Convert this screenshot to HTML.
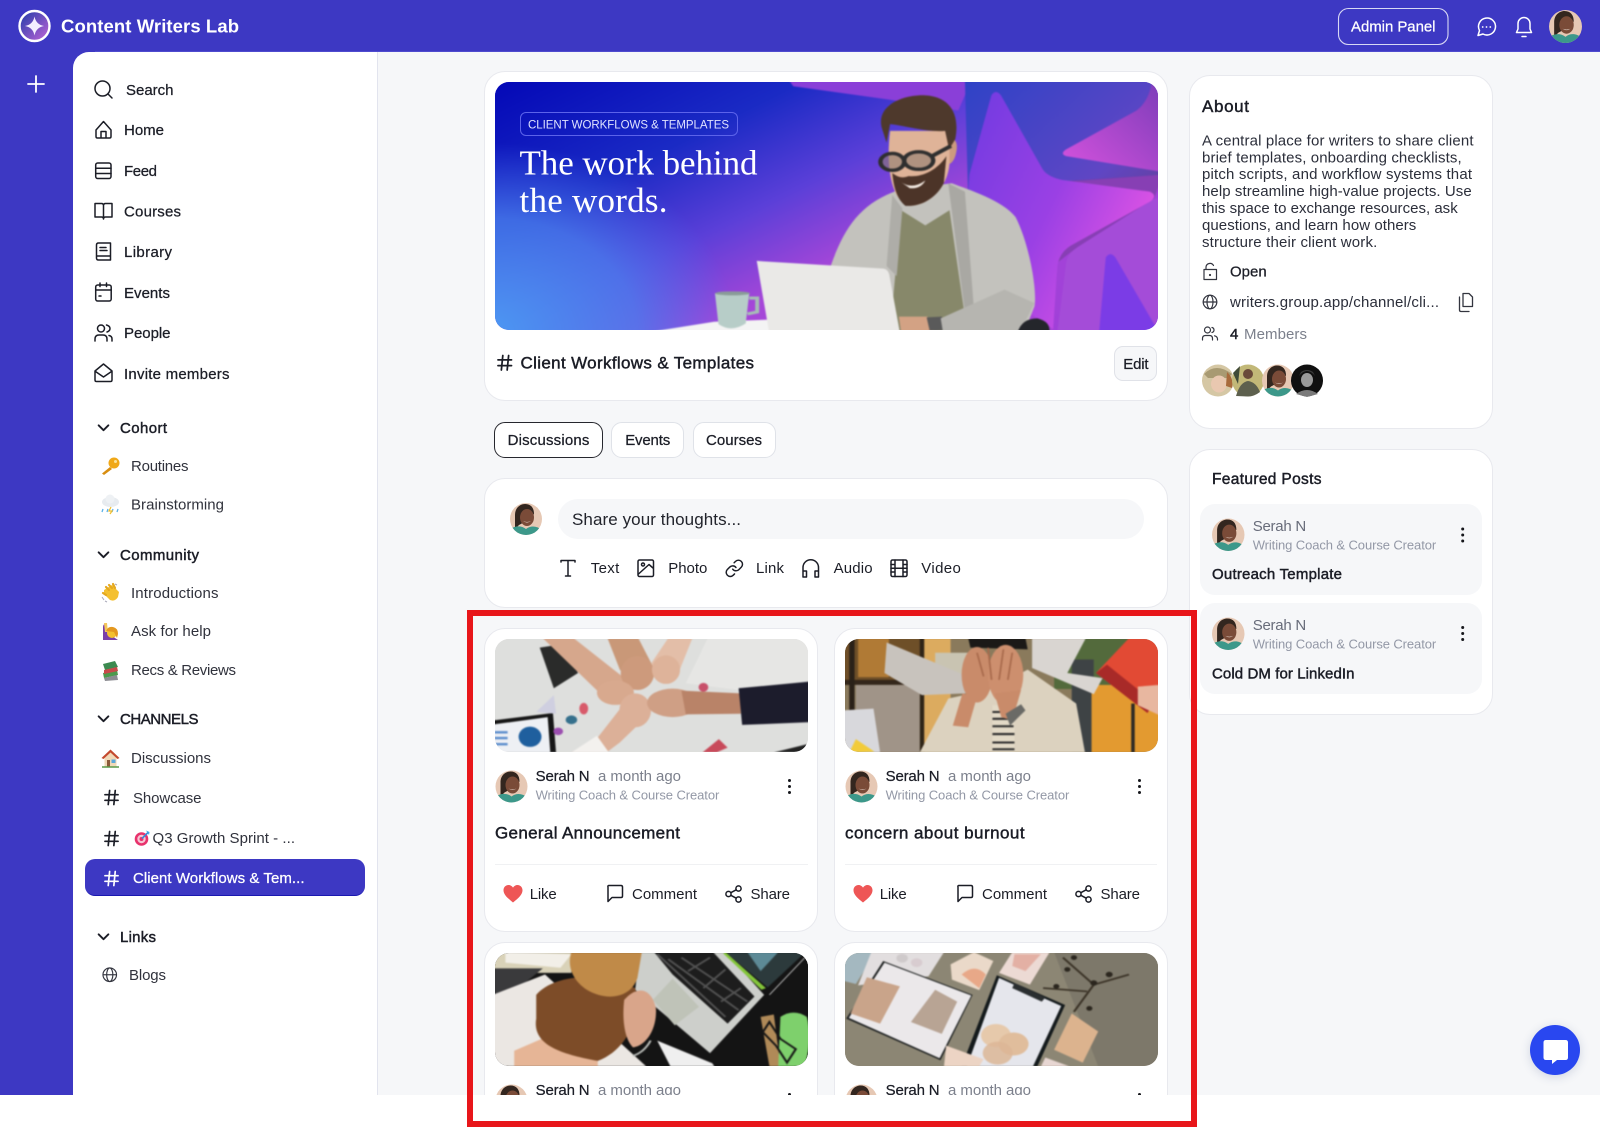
<!DOCTYPE html>
<html lang="en"><head><meta charset="utf-8"><title>Content Writers Lab</title>
<style>
html,body{margin:0;padding:0;background:#fff;overflow:hidden}
#p{position:relative;width:1600px;height:1128px;overflow:hidden;background:#f6f7f9;font-family:"Liberation Sans",sans-serif}
#p div{position:absolute;box-sizing:border-box}
.card{background:#fff;border:1.5px solid #e8e9ee;border-radius:21px}
.ph{overflow:hidden;border-radius:14px}
.ph svg{display:block;width:100%;height:100%;filter:blur(.7px);transform:scale(1.015)}
.tab{background:#fff;border:1.5px solid #dfe2e8;border-radius:11px;top:422px;height:36px}
.fi{background:#f6f7f9;border-radius:15px;left:1200px;width:282px}
svg.layer{position:absolute;left:0;top:0}
text{font-family:"Liberation Sans",sans-serif;font-size:15px;fill:currentColor;color:#1b1d26}
.m{stroke:currentColor;stroke-width:.25}
.b{stroke:currentColor;stroke-width:.45}
.sub{font-size:13px;color:#9398a6}
.g{color:#7c808c}
.r{color:#30323c}
.h{font-size:17px}
.ic{fill:none;stroke:#1b1d26;stroke-width:1.5;stroke-linecap:round;stroke-linejoin:round}
</style></head><body><div id="p">
<div style="left:0;top:0;width:1600px;height:52px;background:#3d38c3;border-bottom:1px solid #4f4bcf"></div>
<div style="left:0;top:50px;width:95px;height:1045px;background:#3d38c3"></div>
<div style="left:73px;top:52px;width:305px;height:1043px;background:#fff;border-right:1.5px solid #e2e4ee;border-top-left-radius:16px"></div>
<div style="left:85px;top:859px;width:280px;height:37px;background:#3d38c3;border-radius:10px;border-bottom:1.5px solid #1a18b0"></div>

<div class="card" style="left:484px;top:71px;width:684px;height:330px"></div>
<div class="ph" style="left:495px;top:82px;width:663px;height:248px;background:#5b3fd8">
<svg viewBox="11 20 1529 745" preserveAspectRatio="none">
<defs>
<linearGradient id="bg" x1="0" y1="0" x2="1" y2=".75"><stop offset="0" stop-color="#0307b6"/><stop offset=".3" stop-color="#1a2ac4"/><stop offset=".5" stop-color="#5b3fd8"/><stop offset=".68" stop-color="#a546d8"/><stop offset="1" stop-color="#a040d8"/></linearGradient>
<radialGradient id="bl" gradientUnits="userSpaceOnUse" cx="11" cy="765" r="560"><stop offset="0" stop-color="#4c98f2"/><stop offset=".6" stop-color="#4a80ee" stop-opacity=".75"/><stop offset="1" stop-color="#4a70ee" stop-opacity="0"/></radialGradient>
<linearGradient id="st" x1="0" y1="0" x2="1" y2=".6"><stop offset="0" stop-color="#6d3ae0"/><stop offset=".55" stop-color="#9a40e4"/><stop offset="1" stop-color="#e455e4"/></linearGradient>
<linearGradient id="dk" x1="0" y1="0" x2="1" y2="1"><stop offset="0" stop-color="#2e42c6"/><stop offset=".6" stop-color="#5f46c4"/><stop offset="1" stop-color="#6a3a80"/></linearGradient>
<linearGradient id="tp" x1="1" y1="0" x2="0" y2="1"><stop offset="0" stop-color="#7a3cb8"/><stop offset="1" stop-color="#d652de"/></linearGradient>
</defs>
<rect x="11" y="20" width="1529" height="745" fill="url(#bg)"/>
<rect x="11" y="20" width="1529" height="745" fill="url(#bl)"/>
<path d="M690 20H1105L1075 110 920 78 700 38Z" fill="#8a3fd8"/>
<path d="M1090 20H1540V300L1340 320 1300 540 1100 500Z" fill="url(#dk)"/>
<path d="M1515 20H1540V292L1320 245Q1305 238 1320 225L1480 110Q1510 80 1515 20Z" fill="url(#tp)"/>
<path d="M1540 300V765H1300L1320 560Q1325 530 1345 515L1515 375 1535 365Z" fill="#a44cd8"/>
<path d="M1540 300 1300 320 1300 560 1345 515 1520 370Z" fill="#7d3ea8" opacity=".75"/>
<path d="M1150 65Q1160 45 1172 65L1265 280Q1275 305 1310 315L1510 350Q1530 362 1510 380L1330 510Q1305 530 1300 570L1290 765H1080L1100 300Z" fill="url(#st)"/>
<path d="M1410 545Q1420 525 1432 545L1530 765H1395Z" fill="#7b3ce6"/>
<path d="M700 765 1020 520 1300 765Z" fill="#a744d8"/>
<path d="M375 765 520 735 660 728V765Z" fill="#f4f4f4"/>
<path d="M785 570C815 460 850 385 940 345L1060 325C1100 345 1175 375 1205 425 1235 500 1255 640 1248 690L1225 765H880Z" fill="#c3c2bd"/>
<path d="M945 405 1000 450 1055 405 1095 765H920Z" fill="#87886a"/>
<path d="M1052 325 1090 350 1110 690 1090 705Z" fill="#a9a8a3"/>
<path d="M925 360 948 400 935 600 912 570Z" fill="#aeada8"/>
<path d="M1050 190Q1078 190 1070 235 1065 270 1045 272Z" fill="#cc9a7e"/>
<path d="M920 170H1055V265C1052 335 1010 392 965 392 930 385 908 300 920 170Z" fill="#dfb398"/>
<path d="M925 295C940 310 950 310 962 304 990 308 1025 290 1048 245L1042 325C1022 375 985 395 955 392 935 372 928 335 925 295Z" fill="#4c3428"/>
<path d="M945 322Q970 345 1000 317 990 342 965 340Z" fill="#f4ebe3"/>
<path d="M902 165C885 95 950 62 1000 65 1052 68 1080 115 1068 195L1054 225 1045 170C1005 175 955 155 920 150L912 205Z" fill="#4e392c"/>
<ellipse cx="925" cy="262" rx="27" ry="25" fill="#8f7b70" fill-opacity=".6" stroke="#2f2f2f" stroke-width="10"/>
<ellipse cx="985" cy="258" rx="33" ry="26" fill="#8f7b70" fill-opacity=".6" stroke="#2f2f2f" stroke-width="10"/>
<path d="M1015 245 1058 215" stroke="#2f2f2f" stroke-width="11"/>
<path d="M617 555 905 578Q915 580 918 595L942 765H645Z" fill="#eae9e7"/>
<path d="M600 665H618V706L596 712" fill="none" stroke="#a6bcb6" stroke-width="9"/>
<path d="M522 650H600L592 740Q560 768 530 742Z" fill="#b7cdc8"/>
<ellipse cx="562" cy="651" rx="40" ry="6" fill="#8a9c98"/>
<path d="M940 720 1005 720 1020 765H945Z" fill="#d3a284"/>
<path d="M1003 722 1038 720 1040 760 1010 762Z" fill="#5a5a5a"/>
<path d="M1035 725 1180 640 1248 680 1215 765H1040Z" fill="#b6b5b0"/>
<path d="M1210 765Q1220 725 1255 725 1285 735 1282 765Z" fill="#24262b"/>
</svg></div>
<div style="left:519.500px;top:112px;width:218px;height:24px;border:1.500px solid #5c63ea;border-radius:6px"></div>
<div style="left:1114px;top:346px;width:43px;height:35px;background:#f6f7f9;border:1.500px solid #e0e2e8;border-radius:9px"></div>

<div class="tab" style="left:494px;width:109px;border-color:#26272e"></div>
<div class="tab" style="left:611px;width:73px"></div>
<div class="tab" style="left:692.500px;width:83px"></div>

<div class="card" style="left:484px;top:478px;width:684px;height:130px"></div>
<div style="left:558px;top:499px;width:586px;height:40px;background:#f6f7f9;border-radius:20px"></div>

<div class="card" style="left:484px;top:628px;width:334px;height:304px"></div>
<div class="card" style="left:834px;top:628px;width:334px;height:304px"></div>
<div class="card" style="left:484px;top:942px;width:334px;height:186px;border-radius:21px 21px 0 0"></div>
<div class="card" style="left:834px;top:942px;width:334px;height:186px;border-radius:21px 21px 0 0"></div>
<div style="left:495px;top:864px;width:313px;height:1px;background:#f0f1f3"></div>
<div style="left:845px;top:864px;width:312px;height:1px;background:#f0f1f3"></div>

<div class="ph" style="left:495px;top:639px;width:313px;height:112.500px;background:#dcdcda">
<svg viewBox="11 27 722 337" preserveAspectRatio="none">
<rect x="11" y="27" width="722" height="337" fill="#dedfdd"/>
<path d="M500 27H733V160L570 180 450 160Z" fill="#e6e6e4"/>
<path d="M118 55 168 45 205 130 150 175Z" fill="#2a2b2a"/>
<path d="M125 27H195L330 165 275 215Z" fill="#d6a78c"/>
<path d="M272 27H342L375 110 340 180 300 120Z" fill="#c99878"/>
<path d="M410 27H465L430 140 380 130 372 100Z" fill="#e3bea8"/>
<ellipse cx="340" cy="130" rx="38" ry="50" fill="#cd9a7c"/>
<ellipse cx="405" cy="120" rx="32" ry="42" fill="#deb39a"/>
<ellipse cx="290" cy="188" rx="42" ry="36" fill="#d8a98e"/>
<ellipse cx="335" cy="240" rx="36" ry="50" fill="#dcb098"/>
<path d="M250 320 310 220 360 260 300 335 270 364H190Z" fill="#dcb098"/>
<path d="M190 364 248 315 275 364Z" fill="#f3f1ee"/>
<ellipse cx="420" cy="218" rx="58" ry="42" fill="#cf9f85"/>
<path d="M440 182 575 190 575 250 450 252Z" fill="#b98368"/>
<path d="M570 175 733 155V275L578 283Z" fill="#1c1c2c"/>
<path d="M11 270 148 248 155 364H11Z" fill="#161616"/><path d="M11 282 136 260 142 364H11Z" fill="#eef0f4"/>
<ellipse cx="96" cy="318" rx="26" ry="30" fill="#1f5f9e"/>
<path d="M15 305H45M15 322H45M15 340H45" stroke="#5a8ccc" stroke-width="7"/>
<circle cx="160" cy="302" r="11" fill="#9c4fb0"/><circle cx="190" cy="268" r="13" fill="#35708c"/><ellipse cx="218" cy="235" rx="10" ry="17" fill="#d85a6a"/><ellipse cx="490" cy="172" rx="11" ry="13" fill="#c8506a"/>
<path d="M488 364 525 325 545 350 520 364Z" fill="#c84a5a"/>
<path d="M650 364 725 340V364Z" fill="#222"/>
<path d="M110 245 150 195 155 250Z" fill="#cfcfe0"/>
</svg></div>
<div class="ph" style="left:845px;top:639px;width:312.500px;height:112.500px;background:#8a7a5c">
<svg viewBox="820 27 720 337" preserveAspectRatio="none">
<rect x="820" y="27" width="720" height="337" fill="#8a7a5c"/>
<rect x="820" y="27" width="195" height="130" fill="#6e4f28"/>
<rect x="855" y="27" width="70" height="115" fill="#b07a35"/>
<rect x="1005" y="27" width="60" height="337" fill="#dcab5f"/>
<rect x="1030" y="70" width="90" height="70" fill="#c9c4b2"/>
<rect x="820" y="150" width="200" height="15" fill="#33261a"/>
<rect x="835" y="27" width="12" height="337" fill="#2a2118"/><rect x="995" y="27" width="10" height="337" fill="#2f2417"/>
<rect x="850" y="165" width="145" height="199" fill="#a09488"/>
<rect x="1300" y="27" width="240" height="150" fill="#536a3c"/>
<rect x="1340" y="90" width="50" height="274" fill="#3e4345"/>
<rect x="1385" y="165" width="155" height="199" fill="#e39a30"/>
<rect x="1475" y="220" width="8" height="144" fill="#2d2a25"/>
<path d="M920 40 1095 135 1100 190 1000 195 915 130Z" fill="#c8c3bd"/>
<path d="M1250 27H1372L1330 130 1410 145 1390 192 1250 115Z" fill="#d9d5d1"/>
<path d="M995 364 1060 205 1150 180 1240 120 1350 220 1370 364Z" fill="#dcd2bf"/>
<path d="M1160 225H1210V364H1160Z" fill="#e3dac7"/>
<path d="M1160 245H1205M1160 265H1205M1160 287H1208M1160 310H1210M1160 335H1210M1160 355H1210" stroke="#2b2b2b" stroke-width="6"/>
<path d="M1105 27H1235L1240 60 1110 55Z" fill="#1b1917"/>
<ellipse cx="1125" cy="135" rx="35" ry="82" fill="#c98b6a"/>
<ellipse cx="1190" cy="135" rx="40" ry="88" fill="#cd8f6e"/>
<path d="M1092 190 1125 200 1105 290 1070 285Z" fill="#c98b6a"/>
<path d="M1165 190 1225 180 1205 270 1180 260Z" fill="#c98b6a"/>
<path d="M1125 70 1140 140M1150 55 1158 150M1185 60 1175 150M1205 70 1195 150" stroke="#a86a4c" stroke-width="4"/>
<path d="M1190 250 1225 222 1235 240 1200 285Z" fill="#6a6a66"/>
<path d="M1395 130 1470 27H1540V180L1512 248Z" fill="#e24a34"/><path d="M1395 130 1512 248 1525 215 1420 105Z" fill="#a82a28"/>
<path d="M1490 170 1540 165V255L1490 225Z" fill="#e8b7a0"/>
<path d="M820 240 890 235 905 364H820Z" fill="#d8d8dc"/>
<path d="M835 364 850 325 892 362Z" fill="#f2cb3a"/>
</svg></div>
<div class="ph" style="left:495px;top:953px;width:313px;height:112.500px;background:#141414">
<svg viewBox="11 24 722 337" preserveAspectRatio="none">
<rect x="11" y="24" width="722" height="337" fill="#141414"/>
<path d="M11 24H190V85H11Z" fill="#d9d2b8"/><path d="M40 24 190 30 165 70 40 55Z" fill="#f2efe8"/>
<path d="M11 72 125 72 60 140 11 155Z" fill="#3a3a3c"/>
<path d="M11 150 130 90 360 361H11Z" fill="#ebe7e3"/>
<path d="M345 24H540L628 150 505 322 335 135Z" fill="#cdcfcb"/>
<path d="M378 24H512L606 155 545 235 420 90Z" fill="#1d1d1d"/>
<path d="M410 45 570 195M440 40 590 170M385 30 540 215M455 80 505 40M490 130 540 75M530 170 575 130" stroke="#6a6a6a" stroke-width="5" opacity=".7"/>
<path d="M420 102 480 185 425 240 375 165Z" fill="#bfc3b8"/>
<path d="M540 24H722L636 128Z" fill="#2c3a3c"/>
<path d="M540 24 632 130 622 135 535 28Z" fill="#84c63a"/>
<path d="M590 24H660L620 80Z" fill="#5d8a96"/>
<path d="M722 38 640 150" stroke="#ddd" stroke-width="2"/>
<path d="M385 285 510 352 515 361H415Z" fill="#efefef"/>
<path d="M60 315 140 270 250 310 250 361H60Z" fill="#e6b596"/>
<path d="M110 150C150 90 250 80 335 130 348 210 320 310 250 345 170 325 100 300 110 220Z" fill="#7d4c28"/>
<path d="M190 24H350L340 100C325 160 270 170 225 135 190 105 180 60 190 24Z" fill="#c08a48"/>
<path d="M310 165C340 120 372 130 382 190 385 250 360 300 330 305 310 280 305 220 310 165Z" fill="#d9a58a"/>
<path d="M330 330Q355 320 370 285" stroke="#b9bcb8" stroke-width="5" fill="none"/>
<path d="M620 215 650 208 665 361 640 361Z" fill="#b08a58"/>
<path d="M665 215Q695 190 725 215 738 280 720 361H660Z" fill="#7ed06c"/>
<path d="M640 230 665 280 700 310 680 350 655 300 625 260Z" fill="none" stroke="#161616" stroke-width="5"/>
</svg></div>
<div class="ph" style="left:845px;top:953px;width:312.500px;height:112.500px;background:#8c8674">
<svg viewBox="820 24 720 337" preserveAspectRatio="none">
<rect x="820" y="24" width="720" height="337" fill="#8c8674"/>
<path d="M1300 24H1540V361H1400Z" fill="#7d786a"/>
<path d="M820 24H895L850 118 820 108Z" fill="#a4b8c0"/>
<path d="M885 24H1050L1015 95 855 122Z" fill="#e2dedf"/>
<circle cx="955" cy="42" r="13" fill="#cfcacb"/><circle cx="988" cy="55" r="13" fill="#d8ccd0"/>
<path d="M1065 60 1118 24 1162 50 1130 136 1068 105Z" fill="#ead9c9"/>
<path d="M1090 90Q1120 55 1145 90L1130 130Z" fill="#e8a888"/>
<path d="M1205 24H1290L1245 120 1175 85Z" fill="#ecdad4"/><path d="M1210 30H1270L1235 80 1205 65Z" fill="#e3b0a4"/>
<path d="M912 50 1115 150 1042 343 828 220Z" fill="#1d2020"/>
<path d="M915 55 1112 152 1040 337 834 218Z" fill="#ebe8ea"/>
<path d="M875 98 950 125 905 235 838 205Z" fill="#c9a48a"/>
<path d="M1030 135 1080 170 1045 265 975 230Z" fill="#b8a494"/>
<path d="M1170 92 1325 180 1262 361H1090Z" fill="#141a1c"/>
<path d="M1175 100 1316 183 1252 361H1102Z" fill="#e5e6ec"/>
<path d="M1210 115 1280 158 1272 170 1205 130Z" fill="#2a2e30"/>
<circle cx="1168" cy="270" r="34" fill="#e6c9ab"/><circle cx="1208" cy="295" r="34" fill="#e0bd9c"/><circle cx="1172" cy="322" r="34" fill="#dcb696" opacity=".85"/>
<path d="M1340 205 1400 258 1365 350 1300 312Z" fill="#dcb38e"/>
<path d="M1055 300 1140 340 1130 361H1050Z" fill="#ecd4c4"/>
<path d="M1280 335 1335 361H1270Z" fill="#e7d6d2"/>
<path d="M1345 200 1390 120 1470 90M1390 120 1320 40M1375 140 1275 130" stroke="#3a3226" stroke-width="5" fill="none"/>
<circle cx="1330" cy="75" r="7" fill="#2b261e"/><circle cx="1390" cy="115" r="8" fill="#2b261e"/><circle cx="1425" cy="90" r="8" fill="#2b261e"/><circle cx="1305" cy="125" r="7" fill="#2b261e"/><circle cx="1345" cy="40" r="7" fill="#2b261e"/><circle cx="1380" cy="190" r="7" fill="#2b261e"/>
</svg></div>

<div class="card" style="left:1189px;top:75px;width:304px;height:354px"></div>
<div class="card" style="left:1189px;top:449px;width:304px;height:266px"></div>
<div class="fi" style="top:504px;height:90.500px"></div>
<div class="fi" style="top:603px;height:91px"></div>

<svg class="layer" width="1600" height="1128" viewBox="0 0 1600 1128" xmlns="http://www.w3.org/2000/svg">
<defs>
<clipPath id="cc"><circle cx="16" cy="16" r="16"/></clipPath>
<symbol id="av" viewBox="0 0 32 32"><g clip-path="url(#cc)"><rect width="32" height="32" fill="#e6c8b4"/><path d="M5 26V12C5 4 11 1 15 1 21 1 24 5 24 11L20 16 9 22Z" fill="#33261f"/><ellipse cx="17" cy="14.500" rx="7" ry="8.500" fill="#7a4b38"/><path d="M13 18Q17 21 21 18 17 20 13 18Z" fill="#f3e6de"/><path d="M0 32V26C5 23 11 22 16 26 21 22 27 23 32 27V32Z" fill="#3c988a"/></g></symbol>
<symbol id="dots" viewBox="0 0 6 16"><circle cx="3" cy="2" r="1.500" fill="#16171c"/><circle cx="3" cy="8" r="1.500" fill="#16171c"/><circle cx="3" cy="14" r="1.500" fill="#16171c"/></symbol>
<symbol id="heart" viewBox="0 0 19 18"><path d="M9.500 17.500C4 13 0 9.500 0 5.200 0 2.200 2.300 0 5 0 6.800 0 8.500 1 9.500 2.600 10.500 1 12.200 0 14 0 16.700 0 19 2.200 19 5.200 19 9.500 15 13 9.500 17.500Z" fill="#ee5656"/></symbol>
<symbol id="cm" viewBox="0 0 17 18"><path d="M2.500 1H14.500Q16 1 16 2.500V11.500Q16 13 14.500 13H5.500L1.500 17V2.500Q1 1 2.500 1Z" class="ic"/></symbol>
<symbol id="sh" viewBox="0 0 18 18"><g class="ic"><circle cx="13.500" cy="3.500" r="2.600"/><circle cx="3.500" cy="9" r="2.600"/><circle cx="13.500" cy="14.500" r="2.600"/><path d="M11.200 4.800 5.800 7.700M5.800 10.300 11.200 13.200"/></g></symbol>
<symbol id="hash" viewBox="0 0 16 17"><path d="M1 5.500H15M1 11.500H15M6 1 4.500 16M12 1 10.500 16" fill="none" stroke-width="1.800" stroke-linecap="round" stroke="currentColor"/></symbol>
<symbol id="chev" viewBox="0 0 14 9"><path d="M1.500 1.500 7 7 12.500 1.500" fill="none" stroke="#1b1d26" stroke-width="2.100" stroke-linecap="round" stroke-linejoin="round"/></symbol>
<symbol id="globe" viewBox="0 0 16 16"><g fill="none" stroke="#33353f" stroke-width="1.200"><circle cx="8" cy="8" r="7"/><ellipse cx="8" cy="8" rx="3.200" ry="7"/><path d="M1 8H15"/></g></symbol>
<linearGradient id="lg" x1="0" y1="0" x2="1" y2="1"><stop offset="0" stop-color="#1f3aa8"/><stop offset="1" stop-color="#c266d8"/></linearGradient>
</defs>

<!-- header -->
<circle cx="34.500" cy="26" r="15" fill="url(#lg)" stroke="#fff" stroke-width="2.400"/>
<path d="M34.500 16.500Q36 24.500 44 26 36 27.500 34.500 35.500 33 27.500 25 26 33 24.500 34.500 16.500Z" fill="#f4efff"/>
<text x="61" y="32.500" textLength="178" style="font-size:18.500px;font-weight:700;color:#fff">Content Writers Lab</text>
<rect x="1338.500" y="8.500" width="109.500" height="36" rx="10" fill="none" stroke="#d8d8f4" stroke-width="1.100"/>
<text class="m" x="1351" y="31.500" textLength="84.500" style="color:#fff">Admin Panel</text>
<g fill="none" stroke="#fff" stroke-width="1.500" stroke-linecap="round" stroke-linejoin="round"><path d="M1478 35.500 1479.500 30.500A8.500 8.500 0 1 1 1483 34Z"/><path d="M1522 36.500H1526M1516.500 32.500H1531.500L1530 29V23.500A6 6 0 0 0 1518 23.500V29Z"/></g>
<circle cx="1482.700" cy="27" r=".9" fill="#fff"/><circle cx="1486.500" cy="27" r=".9" fill="#fff"/><circle cx="1490.300" cy="27" r=".9" fill="#fff"/>
<use href="#av" x="1549" y="10" width="33" height="33"/>
<path d="M36 76V92M28 84H44" stroke="#fff" stroke-width="1.800" stroke-linecap="round"/>

<!-- sidebar icons -->
<g class="ic">
<circle cx="102.500" cy="88.500" r="7.500"/><path d="M108 94 112 98"/>
<path d="M96 130 103.500 121.500 111 130V136.500Q111 138 109.500 138H97.500Q96 138 96 136.500ZM101 138V131.500H106V138"/>
<rect x="95.700" y="163" width="15.300" height="15.500" rx="2"/><path d="M95.700 168.300H111M95.700 173.500H111"/>
<path d="M95 203.500H101.500Q103.500 203.500 103.500 205.500V219Q103.500 217 101.500 217H95ZM112 203.500H105.500Q103.500 203.500 103.500 205.500M112 203.500V217H105.500Q103.500 217 103.500 219"/>
<path d="M98.500 243H110.500V260H98.500Q96.500 260 96.500 258V245Q96.500 243 98.500 243ZM96.500 256H110.500M100 247.500H106M100 250.500H107"/>
<rect x="95.700" y="285" width="15.500" height="16" rx="2"/><path d="M95.700 290H111.200M100 283V286.500M106.500 283V286.500M99 296H101"/>
<circle cx="101" cy="328.500" r="3.500"/><path d="M95 341V339Q95 335 99 335H103Q107 335 107 339V341M106.500 325Q110 326 110 328.500 110 331 107 332M109 335.500Q112 336 112 339V341"/>
<path d="M95 371 103.500 364 112 371V380Q112 381.500 110.500 381.500H96.500Q95 381.500 95 380ZM95.500 371.500 103.500 377 111.500 371.500"/>
</g>
<text class="m" x="126" y="95" textLength="47.500">Search</text>
<text class="m" x="124" y="135" textLength="40">Home</text>
<text class="m" x="124" y="176" textLength="33">Feed</text>
<text class="m" x="124" y="216.500" textLength="57">Courses</text>
<text class="m" x="124" y="257" textLength="48">Library</text>
<text class="m" x="124" y="298" textLength="46">Events</text>
<text class="m" x="124" y="338" textLength="46.500">People</text>
<text class="m" x="124" y="379" textLength="105.500">Invite members</text>
<text class="b" x="120" y="433" textLength="47">Cohort</text>
<text class="b" x="120" y="560" textLength="79">Community</text>
<text class="b" x="120" y="724" textLength="78.500">CHANNELS</text>
<text class="b" x="120" y="942" textLength="36">Links</text>
<text class="r" x="131" y="471" textLength="57.500">Routines</text>
<text class="r" x="131" y="509.500" textLength="93">Brainstorming</text>
<text class="r" x="131" y="598" textLength="87.500">Introductions</text>
<text class="r" x="131" y="636" textLength="80">Ask for help</text>
<text class="r" x="131" y="675" textLength="105">Recs &amp; Reviews</text>
<text class="r" x="131" y="763" textLength="80">Discussions</text>
<text class="r" x="133" y="803" textLength="68.500">Showcase</text>
<text class="r" x="152.500" y="843" textLength="142.500">Q3 Growth Sprint - ...</text>
<text class="m" x="133" y="883" textLength="171.500" style="color:#fff">Client Workflows &amp; Tem...</text>
<text class="r" x="129" y="980" textLength="37">Blogs</text>
<use href="#chev" x="97" y="424" width="13" height="8"/><use href="#chev" x="97" y="551" width="13" height="8"/><use href="#chev" x="97" y="715" width="13" height="8"/><use href="#chev" x="97" y="933" width="13" height="8"/>
<!-- emoji -->
<g><circle cx="114" cy="463" r="5.500" fill="#f0a818"/><circle cx="115.500" cy="461.500" r="1.500" fill="#fbe39a"/><path d="M110 467 102 473.500 104 475 112 469Z" fill="#d88e10"/></g>
<g><ellipse cx="110.500" cy="502" rx="8.500" ry="5" fill="#e7ebef"/><circle cx="110" cy="499" r="4.500" fill="#eef1f4"/><path d="M103 509 102 512M108 509 107 512M113 509 112 512M118 509 117 512" stroke="#5ab2e8" stroke-width="1.300"/><path d="M111 507 109 511H112L110 514" stroke="#f2bf2c" stroke-width="1.200" fill="none"/></g>
<g><path d="M104 590 112 585 119 592 118 597Q115 602 110 600L104 594Z" fill="#f4c030"/><path d="M106 587 109 590M109 585 112 588M113 584 115 588M103 593 106 595" stroke="#e4a820" stroke-width="2.200" stroke-linecap="round"/><path d="M102 597 104 600M105 601 107 602M115 584 117 585" stroke="#aab" stroke-width="1"/></g>
<g><path d="M103 640V627Q103 624 105.500 624L107 632 112 636 118 640Z" fill="#7b3fa8"/><path d="M104 623 107 623 108 632H105Z" fill="#f4c65a"/><circle cx="112" cy="633" r="5" fill="#f4c030"/><path d="M106 631Q108 626 113 627 118 628 118 634L117 638 114 632Z" fill="#e49820"/></g>
<g transform="translate(0 -1)"><path d="M103 674 117 671 118 676 104 679Z" fill="#4c9a4c"/><path d="M103 665 115 662 118 668 105 671Z" fill="#3c8a50"/><path d="M104 671 117 668 118 672 104 675Z" fill="#c84a4a"/><path d="M104 679 117 676 118 681 105 682Z" fill="#8c8c92"/></g>
<g><path d="M102.500 757 110.500 750 118.500 757 116.500 757V767H104.500V757Z" fill="#f0d9b8"/><path d="M101.500 758 110.500 749.500 119.500 758 117.500 759 110.500 752.500 103.500 759Z" fill="#c4492e"/><rect x="107" y="760" width="3" height="7" fill="#8a5a3a"/><rect x="111.500" y="759.500" width="4" height="3.500" fill="#5ba8dc"/><path d="M102 767H119" stroke="#5a9a4a" stroke-width="1.500"/></g>
<g><circle cx="141.500" cy="839" r="6.800" fill="#e8336d"/><circle cx="141.500" cy="839" r="4.200" fill="#f6c6d4"/><circle cx="141.500" cy="839" r="2" fill="#e8336d"/><path d="M142 838.500 148 832.500" stroke="#3a8ad8" stroke-width="1.600"/><path d="M146 830.500 149.500 832 149 835Z" fill="#3aa8e8"/></g>
<use href="#hash" x="104" y="789" width="15" height="17" style="color:#1b1d26"/>
<use href="#hash" x="104" y="830" width="15" height="17" style="color:#1b1d26"/>
<use href="#hash" x="104" y="870" width="15" height="17" style="color:#fff"/>
<use href="#globe" x="102" y="967" width="15.500" height="15.500"/>

<!-- banner text -->
<text x="528" y="128.500" textLength="201" style="font-size:11.500px;color:#dfe2ff">CLIENT WORKFLOWS &amp; TEMPLATES</text>
<text x="519.500" y="174.500" textLength="238" style="font-family:'Liberation Serif',serif;font-size:35px;color:#fff">The work behind</text>
<text x="519.500" y="212" textLength="148" style="font-family:'Liberation Serif',serif;font-size:35px;color:#fff">the words.</text>
<use href="#hash" x="497" y="354" width="15.500" height="17.500" style="color:#1b1d26"/>
<text class="b h" x="520.500" y="368.500" textLength="233.500">Client Workflows &amp; Templates</text>
<text class="m" x="1123.300" y="369" textLength="25.300">Edit</text>
<text class="m" x="507.600" y="445" textLength="81.800">Discussions</text>
<text class="m" x="625.200" y="445" textLength="45">Events</text>
<text class="m" x="706" y="445" textLength="56">Courses</text>

<!-- composer -->
<use href="#av" x="510" y="503" width="32" height="32"/>
<text x="572" y="525" textLength="169" style="font-size:17px;color:#22242c">Share your thoughts...</text>
<g class="ic">
<path d="M561 562V560.500H575V562M568 560.500V576M565.500 576H570.500"/>
<rect x="638" y="560" width="15.500" height="16.500" rx="1.500"/><path d="M638.500 574 649 564.500 653 568"/><circle cx="643" cy="564.500" r="1.500"/>
<g transform="translate(724.500 558.500) scale(.82)" style="stroke-width:1.800"><path d="M10 13a5 5 0 0 0 7.540.54l3-3a5 5 0 0 0-7.070-7.070l-1.720 1.710"/><path d="M14 11a5 5 0 0 0-7.540-.54l-3 3a5 5 0 0 0 7.070 7.070l1.710-1.710"/></g>
<path d="M803 575V567.500A7.700 7.700 0 0 1 818.500 567.500V575M803 571H806.500V577H803ZM815 571H818.500V577H815Z"/>
<rect x="891" y="560" width="16" height="16.500" rx="1.500"/><path d="M895 560V576.500M903 560V576.500M891 564.500H895M891 568.200H907M891 572H895M903 564.500H907M903 572H907"/>
</g>
<text x="590.800" y="573" textLength="28.500">Text</text>
<text x="668.300" y="573" textLength="39">Photo</text>
<text x="756" y="573" textLength="28">Link</text>
<text x="833.600" y="573" textLength="39">Audio</text>
<text x="921.300" y="573" textLength="39.500">Video</text>

<!-- posts -->
<use href="#av" x="495.500" y="770" width="32" height="33"/>
<text class="m" x="535.600" y="781" textLength="54">Serah N</text>
<text class="g" x="598" y="781" textLength="83">a month ago</text>
<text class="sub" x="535.600" y="799.500" textLength="183.700">Writing Coach &amp; Course Creator</text>
<use href="#dots" x="786.500" y="778.500" width="6" height="16"/>
<text class="b h" x="495" y="838.500" textLength="185">General Announcement</text>
<use href="#heart" x="503.500" y="885" width="19" height="18"/>
<text x="529.700" y="899" textLength="27">Like</text>
<use href="#cm" x="606.500" y="884.500" width="17" height="18"/>
<text x="632" y="899" textLength="65">Comment</text>
<use href="#sh" x="725" y="885" width="18" height="18"/>
<text x="750.500" y="899" textLength="39.500">Share</text>

<use href="#av" x="845.500" y="770" width="32" height="33"/>
<text class="m" x="885.600" y="781" textLength="54">Serah N</text>
<text class="g" x="948" y="781" textLength="83">a month ago</text>
<text class="sub" x="885.600" y="799.500" textLength="183.700">Writing Coach &amp; Course Creator</text>
<use href="#dots" x="1136.500" y="778.500" width="6" height="16"/>
<text class="b h" x="845" y="838.500" textLength="179.600">concern about burnout</text>
<use href="#heart" x="853.500" y="885" width="19" height="18"/>
<text x="879.700" y="899" textLength="27">Like</text>
<use href="#cm" x="956.500" y="884.500" width="17" height="18"/>
<text x="982" y="899" textLength="65">Comment</text>
<use href="#sh" x="1075" y="885" width="18" height="18"/>
<text x="1100.500" y="899" textLength="39.500">Share</text>

<use href="#av" x="495.500" y="1084" width="32" height="33"/>
<text class="m" x="535.600" y="1095" textLength="54">Serah N</text>
<text class="g" x="598" y="1095" textLength="83">a month ago</text>
<use href="#dots" x="786.500" y="1092.500" width="6" height="16"/>
<use href="#av" x="845.500" y="1084" width="32" height="33"/>
<text class="m" x="885.600" y="1095" textLength="54">Serah N</text>
<text class="g" x="948" y="1095" textLength="83">a month ago</text>
<use href="#dots" x="1136.500" y="1092.500" width="6" height="16"/>

<!-- about -->
<text class="b h" x="1202" y="112" textLength="47">About</text>
<text x="1202" y="145.500" textLength="271.500" style="color:#2b2e3a">A central place for writers to share client</text>
<text x="1202" y="162.500" textLength="259.700" style="color:#2b2e3a">brief templates, onboarding checklists,</text>
<text x="1202" y="179.200" textLength="270" style="color:#2b2e3a">pitch scripts, and workflow systems that</text>
<text x="1202" y="196.200" textLength="269.700" style="color:#2b2e3a">help streamline high-value projects. Use</text>
<text x="1202" y="213" textLength="255.700" style="color:#2b2e3a">this space to exchange resources, ask</text>
<text x="1202" y="230" textLength="214.300" style="color:#2b2e3a">questions, and learn how others</text>
<text x="1202" y="246.800" textLength="175.300" style="color:#2b2e3a">structure their client work.</text>
<g class="ic" style="stroke-width:1.200;stroke:#33353f">
<path d="M1204 269.500H1216.500V279.500H1204ZM1206 269.500V267A4 4 0 0 1 1213.500 265.500"/>
<circle cx="1210" cy="302" r="6.800"/><ellipse cx="1210" cy="302" rx="3" ry="6.800"/><path d="M1203.200 302H1216.800"/>
<path d="M1463 293.500H1469L1472.500 297V306.500H1463ZM1459.500 297V310Q1459.500 311.500 1461 311.500H1469" style="stroke-width:1.300"/>
<circle cx="1207.500" cy="330" r="3"/><path d="M1202.500 340V338.500Q1202.500 335.500 1205.500 335.500H1209.500Q1212.500 335.500 1212.500 338.500V340M1212 327.500Q1214 328 1214 330 1214 332 1212 332.500M1214.500 335.800Q1217.500 336.500 1217.500 339V340"/>
</g>
<circle cx="1210" cy="275" r="1.100" fill="#33353f"/>
<text class="m" x="1230" y="276.500" textLength="36.700">Open</text>
<text x="1230" y="307" textLength="209" style="color:#2b2e3a">writers.group.app/channel/cli...</text>
<text class="b" x="1230" y="339" textLength="8">4</text>
<text class="g" x="1244" y="339" textLength="63">Members</text>
<!-- member avatars -->
<g>
<circle cx="1218" cy="380.500" r="16" fill="#d5c7a4"/><path d="M1204 374Q1216 362 1232 374L1228 378 1208 378Z" fill="#a89a72"/><ellipse cx="1219" cy="384" rx="8" ry="8.500" fill="#e9c8b0"/><path d="M1227 372Q1234 378 1232 388L1226 386Z" fill="#a86a3c"/>
<circle cx="1248" cy="380.500" r="16" fill="#c2b878"/><path d="M1236 396Q1240 382 1248 381 1256 382 1260 392 1254 396.500 1248 396.500Z" fill="#5d604e"/><circle cx="1248" cy="374" r="5" fill="#6a4a3a"/><path d="M1233 373 1240 366 1238 384Z" fill="#3f4a38"/>
<use href="#av" x="1262" y="364.500" width="32" height="32"/>
<circle cx="1307" cy="380.500" r="16" fill="#101010"/><ellipse cx="1307" cy="380" rx="6" ry="7" fill="#9a9a9a"/><path d="M1299 376Q1307 366 1315 376L1313 372Q1307 368 1301 372Z" fill="#3a3a3a"/><path d="M1296 394Q1307 386 1318 394L1307 397Z" fill="#7a7a7a"/>
</g>

<!-- featured -->
<text class="b" x="1212" y="484" textLength="109.500" style="font-size:15.500px">Featured Posts</text>
<use href="#av" x="1212" y="518.500" width="32.500" height="32.500"/>
<text x="1252.700" y="531" textLength="53.500" style="color:#686c7a">Serah N</text>
<text class="sub" x="1252.700" y="549.500" textLength="183.500">Writing Coach &amp; Course Creator</text>
<use href="#dots" x="1459.700" y="527" width="6" height="16"/>
<text class="b" x="1212" y="579" textLength="130">Outreach Template</text>
<use href="#av" x="1212" y="617.500" width="32.500" height="32.500"/>
<text x="1252.700" y="630" textLength="53.500" style="color:#686c7a">Serah N</text>
<text class="sub" x="1252.700" y="648.500" textLength="183.500">Writing Coach &amp; Course Creator</text>
<use href="#dots" x="1459.700" y="625.500" width="6" height="16"/>
<text class="b" x="1212" y="678.500" textLength="142.500">Cold DM for LinkedIn</text>
</svg>

<div style="left:1530px;top:1025px;width:50px;height:50px;border-radius:50%;background:#2947f0;box-shadow:0 2px 10px rgba(40,60,120,.18)"></div>
<svg class="layer" width="1600" height="1128" viewBox="0 0 1600 1128" xmlns="http://www.w3.org/2000/svg"><path d="M1546 1040H1565.500Q1568 1040 1568 1042.500V1057.500Q1568 1060 1565.500 1060H1557L1552 1064V1060H1546Q1543.500 1060 1543.500 1057.500V1042.500Q1543.500 1040 1546 1040Z" fill="#fff"/></svg>

<div style="left:0;top:1095px;width:1600px;height:33px;background:#fff"></div>
<div style="left:467px;top:610px;width:730px;height:517px;border:6px solid #e8161a"></div>
</div></body></html>
